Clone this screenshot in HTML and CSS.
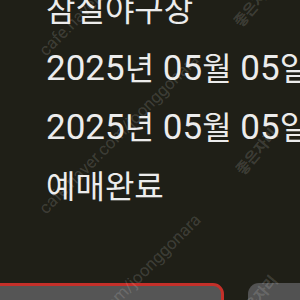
FILE: index.html
```html
<!DOCTYPE html>
<html lang="ko">
<head>
    <meta charset="UTF-8">
    <meta name="viewport" content="width=device-width, initial-scale=1.0">
    <title>예매 정보</title>
    <link rel="stylesheet" href="styles.css">
</head>
<body>

    <div class="screen">
        <!-- Ticket details -->
        <ul class="info">
            <li><span class="ko">잠실야구장</span></li>
            <li>2025<span class="ko">년</span> 05<span class="ko">월</span> 05<span class="ko">일</span></li>
            <li>2025<span class="ko">년</span> 05<span class="ko">월</span> 05<span class="ko">일</span></li>
            <li><span class="ko">예매완료</span></li>
        </ul>

        <!-- Bottom buttons -->
        <div class="actions">
            <button class="btn btn-selected"></button>
            <button class="btn"></button>
        </div>

        <!-- Cafe watermark -->
        <div class="watermark">
            <span class="mark-url mark-a">cafe.naver.com/joonggonara</span>
            <span class="mark-url mark-b">cafe.naver.com/joonggonara</span>
            <span class="mark-url mark-c">cafe.naver.com/joonggonara</span>
            <span class="mark-name mark-d">좋은자리</span>
            <span class="mark-name mark-e">좋은자리</span>
            <span class="mark-name mark-f">좋은자리</span>
        </div>
    </div>

</body>
</html>
```

FILE: styles.css
```css
/* Basic reset */
* {
    margin: 0;
    padding: 0;
    box-sizing: border-box;
}

body {
    font-family: Roboto, "Noto Sans CJK KR", sans-serif;
    background-color: #1f1f17;
    color: #ececec;
}

/* Screen */
.screen {
    position: relative;
    width: 300px;
    height: 300px;
    overflow: hidden;
}

/* Ticket details */
.info {
    list-style: none;
    margin-top: -20px;
    padding-left: 46px;
    font-size: 35px;
    line-height: 59px;
    white-space: nowrap;
}

.ko {
    font-family: "Noto Sans CJK KR", sans-serif;
    font-size: 32px;
    line-height: 1;
}

/* Buttons */
.actions {
    display: flex;
    gap: 24px;
    margin-top: 67px;
    margin-left: -20px;
}

.btn {
    flex: none;
    width: 120px;
    height: 60px;
    background-color: #525252;
    border: none;
    border-radius: 11px;
}

.btn-selected {
    width: 244px;
    background-color: #555555;
    border: 3px solid #c4302a;
}

/* Watermark */
.watermark {
    position: absolute;
    inset: 0;
    pointer-events: none;
}

.mark-url,
.mark-name {
    position: absolute;
    white-space: nowrap;
    line-height: 1;
    color: rgba(255, 255, 255, 0.15);
    transform-origin: 0 100%;
}

.mark-url {
    font-size: 17px;
    transform: rotate(-45deg);
}

.mark-name {
    font-family: "Noto Sans CJK KR", sans-serif;
    font-weight: bold;
    font-size: 15px;
    transform: rotate(-50deg);
}

.mark-a { left: 48px; top: 42px; }
.mark-b { left: 48px; top: 200px; }
.mark-c { left: 50px; top: 360px; }
.mark-d { left: 242px; top: 14px; }
.mark-e { left: 244px; top: 162px; }
.mark-f { left: 244px; top: 309px; }
```
